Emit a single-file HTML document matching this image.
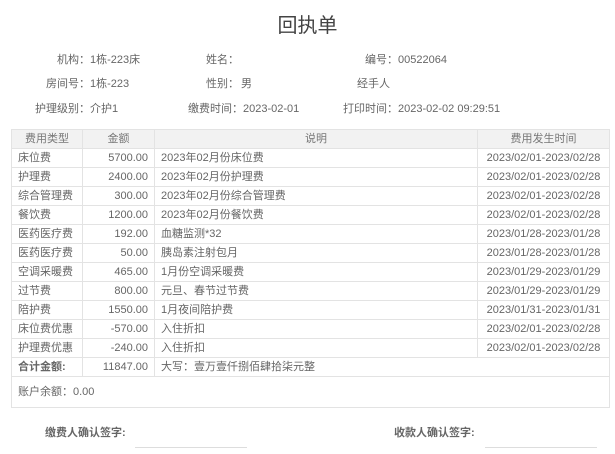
<!DOCTYPE html>
<html><head><meta charset="utf-8"><style>
*{margin:0;padding:0;box-sizing:border-box}
body{width:615px;height:454px;background:#fff;font-family:"Liberation Sans","Noto Sans CJK SC",sans-serif;font-size:11px;color:#666;position:relative;overflow:hidden}
.a{position:absolute;white-space:nowrap;line-height:14px}
.r{text-align:right}
h1{position:absolute;left:0;width:615px;top:13px;text-align:center;font-size:20px;font-weight:normal;color:#444;line-height:26px}
table{position:absolute;left:11px;top:129px;width:598px;border-collapse:collapse;table-layout:fixed}
td,th{border:1px solid #e3e3e3;height:19px;padding:0 6px;font-weight:normal;white-space:nowrap;line-height:17px}
th{background:#f2f2f2;text-align:center;color:#777}
td.n{text-align:right}
td.d{text-align:center}
.line{position:absolute;height:1px;background:#ddd}
</style></head><body>
<h1>回执单</h1>
<div class="a r" style="right:525px;top:53px">机构：</div><div class="a" style="left:90px;top:53px">1栋-223床</div>
<div class="a r" style="right:525px;top:77px">房间号：</div><div class="a" style="left:90px;top:77px">1栋-223</div>
<div class="a r" style="right:525px;top:102px">护理级别：</div><div class="a" style="left:90px;top:102px">介护1</div>
<div class="a r" style="right:376px;top:53px">姓名：</div>
<div class="a r" style="right:376px;top:77px">性别：</div><div class="a" style="left:241px;top:77px">男</div>
<div class="a r" style="right:372px;top:102px">缴费时间：</div><div class="a" style="left:243px;top:102px">2023-02-01</div>
<div class="a r" style="right:217px;top:53px">编号：</div><div class="a" style="left:398px;top:53px">00522064</div>
<div class="a" style="left:357px;top:77px">经手人</div>
<div class="a r" style="right:217px;top:102px">打印时间：</div><div class="a" style="left:398px;top:102px">2023-02-02 09:29:51</div>
<table>
<colgroup><col style="width:71px"><col style="width:72px"><col style="width:323px"><col style="width:132px"></colgroup>
<tr><th>费用类型</th><th>金额</th><th>说明</th><th>费用发生时间</th></tr>
<tr><td>床位费</td><td class="n">5700.00</td><td>2023年02月份床位费</td><td class="d">2023/02/01-2023/02/28</td></tr>
<tr><td>护理费</td><td class="n">2400.00</td><td>2023年02月份护理费</td><td class="d">2023/02/01-2023/02/28</td></tr>
<tr><td>综合管理费</td><td class="n">300.00</td><td>2023年02月份综合管理费</td><td class="d">2023/02/01-2023/02/28</td></tr>
<tr><td>餐饮费</td><td class="n">1200.00</td><td>2023年02月份餐饮费</td><td class="d">2023/02/01-2023/02/28</td></tr>
<tr><td>医药医疗费</td><td class="n">192.00</td><td>血糖监测*32</td><td class="d">2023/01/28-2023/01/28</td></tr>
<tr><td>医药医疗费</td><td class="n">50.00</td><td>胰岛素注射包月</td><td class="d">2023/01/28-2023/01/28</td></tr>
<tr><td>空调采暖费</td><td class="n">465.00</td><td>1月份空调采暖费</td><td class="d">2023/01/29-2023/01/29</td></tr>
<tr><td>过节费</td><td class="n">800.00</td><td>元旦、春节过节费</td><td class="d">2023/01/29-2023/01/29</td></tr>
<tr><td>陪护费</td><td class="n">1550.00</td><td>1月夜间陪护费</td><td class="d">2023/01/31-2023/01/31</td></tr>
<tr><td>床位费优惠</td><td class="n">-570.00</td><td>入住折扣</td><td class="d">2023/02/01-2023/02/28</td></tr>
<tr><td>护理费优惠</td><td class="n">-240.00</td><td>入住折扣</td><td class="d">2023/02/01-2023/02/28</td></tr>
<tr><td style="font-weight:bold">合计金额:</td><td class="n">11847.00</td><td colspan="2">大写：壹万壹仟捌佰肆拾柒元整</td></tr>
<tr><td colspan="4" style="height:31px">账户余额：0.00</td></tr>
</table>
<div class="a" style="left:45px;top:426px;font-weight:bold;color:#666">缴费人确认签字:</div>
<div class="line" style="left:135px;top:447px;width:112px"></div>
<div class="a" style="left:394px;top:426px;font-weight:bold;color:#666">收款人确认签字:</div>
<div class="line" style="left:485px;top:447px;width:112px"></div>
</body></html>
